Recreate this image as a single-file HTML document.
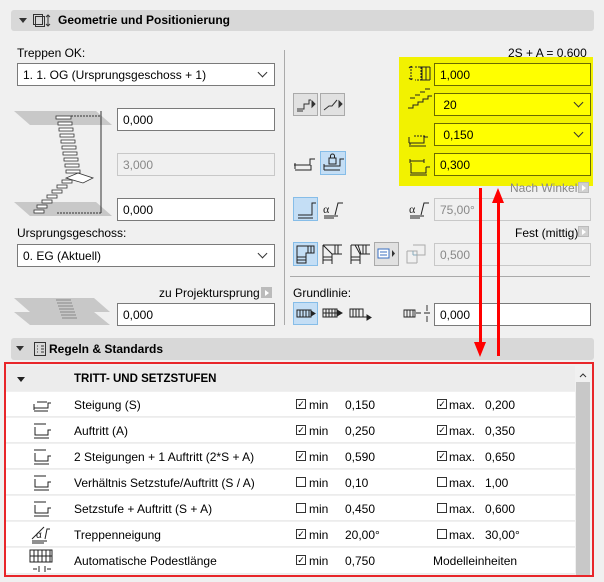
<!DOCTYPE html>
<html><head><meta charset="utf-8"><style>
*{margin:0;padding:0;box-sizing:border-box}
body{width:604px;height:582px;background:#f0f0f0;font-family:"Liberation Sans",sans-serif;font-size:12px;color:#000;position:relative;overflow:hidden}
.a{position:absolute}
.hdr{position:absolute;left:11px;width:583px;height:21px;background:#d8d8d8;border-radius:3px;font-weight:bold;font-size:12px}
.tri{position:absolute;width:0;height:0;border-left:4px solid transparent;border-right:4px solid transparent;border-top:5px solid #333}
.inp{position:absolute;height:23px;background:#fff;border:1px solid #7a7a7a;padding:4px 0 0 5px;font-size:12px}
.dis{background:#f0f0f0;border-color:#c8c8c8;color:#888}
.yel{background:#ffff00;border-color:#6a6a00}
.chev{position:absolute;right:8px;top:6px;width:7px;height:7px;border-right:1px solid #333;border-bottom:1px solid #333;transform:rotate(45deg)}
.btn{position:absolute;border:1px solid #aaa;background:#e1e1e1}
.sel{background:#c4def5;border:1px solid #86bde8}
.row{position:absolute;left:6px;width:569px;height:25px;background:#fff;border-bottom:1px solid #ececec}
.row span{position:absolute;top:6px}
.cb{position:absolute;top:7px;width:10px;height:10px;border:1px solid #333;background:#fff;font-size:9px;line-height:8px;text-align:center}
.sm{position:absolute;width:11px;height:11px;background:#d0d0d0;border:1px solid #bbb}
.sm:after{content:"";position:absolute;left:3px;top:2px;border-top:3px solid transparent;border-bottom:3px solid transparent;border-left:4px solid #fff}
</style></head><body>

<div class="hdr" style="top:10px"><div class="tri" style="left:8px;top:8px"></div>
<svg class="a" style="left:21px;top:3px" width="20" height="15"><rect x="1.5" y="1.5" width="9" height="10" fill="none" stroke="#333"/><rect x="3.5" y="3.5" width="9" height="10" fill="none" stroke="#333"/><path d="M16 2v11M14 4l2-2 2 2M14 11l2 2 2-2" stroke="#333" fill="none"/></svg>
<span class="a" style="left:47px;top:3px">Geometrie und Positionierung</span></div>

<span class="a" style="left:17px;top:46px">Treppen OK:</span>
<div class="inp" style="left:17px;top:63px;width:258px">1. 1. OG (Ursprungsgeschoss + 1)<div class="chev" style="top:5px"></div></div>

<svg class="a" style="left:14px;top:108px" width="100" height="112">
<polygon points="0,3 82,3 98,17 16,17" fill="#c8c8c8"/><polygon points="0,94 82,94 98,108 16,108" fill="#c8c8c8"/>
<path d="M57,8 L87,8 M87,3 V105 M43,105 L87,105" stroke="#333" stroke-dasharray="2,1" fill="none"/>
<path d="M87,3V105" stroke="#333"/>
<g fill="#fff" stroke="#333" stroke-width="0.8">
<rect x="42" y="8" width="15" height="3"/><rect x="44" y="14" width="14" height="3"/><rect x="45" y="20" width="14" height="3"/><rect x="46" y="26" width="14" height="3"/><rect x="47" y="32" width="14" height="3"/><rect x="48" y="38" width="14" height="3"/><rect x="49" y="44" width="14" height="3"/><rect x="50" y="50" width="14" height="3"/><rect x="51" y="56" width="14" height="3"/><rect x="52" y="62" width="14" height="3"/>
<polygon points="64,65 79,70 69,75 52,70"/>
<rect x="48" y="72" width="10" height="3"/><rect x="43" y="77" width="10" height="3"/><rect x="38" y="82" width="10" height="3"/><rect x="33" y="87" width="10" height="3"/><rect x="28" y="92" width="10" height="3"/><rect x="23" y="97" width="10" height="3"/><rect x="20" y="102" width="10" height="3"/></g></svg>

<div class="inp" style="left:117px;top:108px;width:158px">0,000</div>
<div class="inp dis" style="left:117px;top:153px;width:158px">3,000</div>
<div class="inp" style="left:117px;top:198px;width:158px">0,000</div>
<span class="a" style="left:17px;top:226px">Ursprungsgeschoss:</span>
<div class="inp" style="left:17px;top:244px;width:258px">0. EG (Aktuell)<div class="chev" style="top:5px"></div></div>
<span class="a" style="left:159px;top:286px">zu Projektursprung</span>
<div class="sm" style="left:261px;top:287px;background:#bbb"></div>
<svg class="a" style="left:14px;top:295px" width="100" height="32"><polygon points="0,3 80,3 96,17 16,17" fill="#c8c8c8"/><polygon points="0,17 80,17 96,30 16,30" fill="#c8c8c8"/><g stroke="#888"><path d="M42,5h15M43,8h15M44,11h15M45,14h15M46,17h15M47,20h15M48,23h15"/></g></svg>
<div class="inp" style="left:117px;top:303px;width:158px">0,000</div>

<div class="a" style="left:284px;top:50px;width:1px;height:235px;background:#aaa"></div>
<div class="a" style="left:284px;top:285px;width:1px;height:40px;background:#aaa"></div>

<span class="a" style="left:508px;top:46px">2S + A = 0,600</span>
<div class="a" style="left:399px;top:57px;width:194px;height:129px;background:#f2f200"></div>
<svg class="a" style="left:408px;top:64px" width="24" height="112" stroke="#222" fill="none">
<path d="M3,2v14M1,4l2-2 2,2M1,14l2,2 2-2M7,3h6v13h-6" stroke-dasharray="2,1"/><path d="M12,3h10M12,16h10M14,3v13M18,3v13M22,3v13"/>
<path d="M0,50h5v-3h5v-3h5v-3h5v-3h4" transform="translate(0,-6)"/><path d="M2,40h5M7,37h5M12,34h5M17,31h5" transform="translate(0,-6)"/>
<path d="M1,79h15v-6h4M2,79v2M1,73v6" /><path d="M6,72h12" stroke-dasharray="2,1"/><path d="M1,82h17"/>
<path d="M3,101v8h15v-6M18,103h4M2,97h14M2,95v4M16,95v4" /><path d="M3,101v-2" stroke-dasharray="2,1"/><path d="M2,111h17"/>
</svg>
<div class="inp yel" style="left:434px;top:63px;width:157px">1,000</div>
<div class="inp yel" style="left:434px;top:93px;width:157px">&nbsp;20<div class="chev" style="top:5px"></div></div>
<div class="inp yel" style="left:434px;top:123px;width:157px">&nbsp;0,150<div class="chev" style="top:5px"></div></div>
<div class="inp yel" style="left:434px;top:153px;width:157px">0,300</div>
<span class="a" style="left:510px;top:181px;color:#888">Nach Winkel</span>
<div class="sm" style="left:578px;top:182px"></div>

<div class="btn" style="left:293px;top:93px;width:25px;height:23px"><svg width="23" height="21" stroke="#333" fill="none"><path d="M3,15h7v-5h5v-4h2M3,17h6"/><path d="M18,7l3,3-3,3z" fill="#333"/></svg></div>
<div class="btn" style="left:320px;top:93px;width:25px;height:23px"><svg width="23" height="21" stroke="#333" fill="none"><path d="M3,16l5-4h3l5-6"/><path d="M18,7l3,3-3,3z" fill="#333"/></svg></div>

<svg class="a" style="left:293px;top:153px" width="25" height="20" stroke="#222" fill="none"><path d="M1,12h16v-6h5M17,6h0M2,17h16v-5M2,10v6"/><path d="M3,12h12" stroke-dasharray="2,1"/></svg>
<div class="btn sel" style="left:320px;top:151px;width:26px;height:24px"><svg width="24" height="22" stroke="#222" fill="none"><rect x="8" y="6" width="7" height="6"/><path d="M9.5,6v-2a2,2 0 0 1 4,0v2M3,14h16v-7h4M3,18h16M3,12v6"/></svg></div>

<div class="btn sel" style="left:293px;top:197px;width:25px;height:24px"><svg width="23" height="22" stroke="#222" fill="none"><path d="M4,17h14v-12h4M4,20h15"/></svg></div>
<svg class="a" style="left:322px;top:199px" width="22" height="20" stroke="#222" fill="none"><text x="1" y="14" font-size="12" fill="#222" stroke="none" font-family="Liberation Serif">α</text><path d="M13,16l3-12h5M2,17h14M2,19h10"/></svg>
<svg class="a" style="left:408px;top:199px" width="22" height="20" stroke="#222" fill="none"><text x="1" y="14" font-size="12" fill="#222" stroke="none" font-family="Liberation Serif">α</text><path d="M13,16l3-12h5M2,17h14M2,19h10"/></svg>
<div class="inp dis" style="left:434px;top:198px;width:157px">75,00°</div>
<span class="a" style="left:515px;top:226px">Fest (mittig)</span>
<div class="sm" style="left:578px;top:226px"></div>

<div class="btn sel" style="left:293px;top:242px;width:25px;height:24px"><svg width="23" height="22" stroke="#222" fill="none"><path d="M3,3h17v7h-8v10h-9zM14,3v7M17,3v7M3,14h9M3,17h9"/></svg></div>
<svg class="a" style="left:321px;top:243px" width="24" height="22" stroke="#222" fill="none"><path d="M2,2h19M2,2v19M2,2l9,9h10M14,2v9M17,2v9M2,14h9M2,17h9M11,11v10"/></svg>
<svg class="a" style="left:349px;top:243px" width="24" height="22" stroke="#222" fill="none"><path d="M2,2h19M2,2v19M11,11h10M14,2v9M17,2v9M2,14h9M2,17h9M11,11v10M6,2l5,9M9,2l3,9"/></svg>
<div class="btn" style="left:374px;top:242px;width:25px;height:24px"><svg width="23" height="22"><rect x="3" y="6" width="11" height="9" fill="#fff" stroke="#3a6fc0"/><path d="M5,9h7M5,12h7" stroke="#3a6fc0"/><path d="M17,7l3,3.5-3,3.5z" fill="#333"/></svg></div>
<svg class="a" style="left:405px;top:243px" width="22" height="22" stroke="#aaa" fill="none"><path d="M2,8h10v12M8,2h12v10h-8M2,8v12h10"/><path d="M8,12h4M8,8v4" stroke="#8ab"/></svg>
<div class="inp dis" style="left:434px;top:243px;width:157px">0,500</div>

<div class="a" style="left:290px;top:276px;width:300px;height:1px;background:#aaa"></div>
<span class="a" style="left:293px;top:286px">Grundlinie:</span>
<div class="btn sel" style="left:293px;top:302px;width:25px;height:23px"><svg width="23" height="21" stroke="#222" fill="none"><path d="M3,7h14v7h-14zM6,7v7M9,7v7M12,7v7M15,7v7"/><path d="M17,8l4,2.5-4,2.5z" fill="#222"/></svg></div>
<svg class="a" style="left:322px;top:304px" width="24" height="20" stroke="#222" fill="none"><path d="M1,5h14v8h-14zM1,9h14M4,5v8M7,5v8M10,5v8M13,5v8"/><path d="M15,6l5,3-5,3z" fill="#222"/></svg>
<svg class="a" style="left:349px;top:304px" width="24" height="22" stroke="#222" fill="none"><path d="M1,5h13v8h-13zM4,5v8M7,5v8M10,5v8M14,13h4"/><path d="M18,11l4,2.5-4,2.5z" fill="#222"/></svg>
<svg class="a" style="left:403px;top:304px" width="28" height="20" stroke="#222" fill="none"><path d="M1,6h11v7h-11zM4,6v7M7,6v7M10,6v7M13,9h5M24,1v6M24,12v6M21,9h6" stroke-width="0.9"/></svg>
<div class="inp" style="left:434px;top:303px;width:157px">0,000</div>

<div class="hdr" style="top:338px;height:22px"><div class="tri" style="left:5px;top:8px"></div>
<svg class="a" style="left:22px;top:3px" width="14" height="16" stroke="#333" fill="none"><rect x="1.5" y="1.5" width="11" height="13"/><path d="M4,5h1M8,5h3M4,8h1M8,8h3M4,11h1M8,11h3"/></svg>
<span class="a" style="left:38px;top:4px">Regeln &amp; Standards</span></div>

<div class="a" style="left:6px;top:366px;width:569px;height:25px;background:#ececec"></div>
<div class="tri" style="left:17px;top:377px;border-top-color:#222"></div>
<span class="a" style="left:74px;top:373px;font-weight:bold;font-size:11.5px">TRITT- UND SETZSTUFEN</span>
<div class="a" style="left:576px;top:366px;width:14px;height:208px;background:#f0f0f0"></div>
<div class="a" style="left:576px;top:382px;width:14px;height:194px;background:#c8c8c8"></div>
<svg class="a" style="left:578px;top:371px" width="10" height="8"><path d="M2,6l3-3 3,3" stroke="#333" fill="none"/></svg>

<div class="row" style="top:392px"><svg class="a" style="left:26px;top:4px" width="20" height="18" stroke="#222" fill="none"><path d="M2,12h14v-5h3M2,15h14M2,8v6M5,6h10" /></svg><span style="left:68px">Steigung (S)</span><div class="cb" style="left:290px">✓</div><span style="left:303px">min</span><span style="left:339px">0,150</span><div class="cb" style="left:431px">✓</div><span style="left:443px">max.</span><span style="left:479px">0,200</span></div>
<div class="row" style="top:418px"><svg class="a" style="left:26px;top:3px" width="20" height="20" stroke="#222" fill="none"><path d="M2,3h12M3,6v8h13v-5h3M2,17h15"/></svg><span style="left:68px">Auftritt (A)</span><div class="cb" style="left:290px">✓</div><span style="left:303px">min</span><span style="left:339px">0,250</span><div class="cb" style="left:431px">✓</div><span style="left:443px">max.</span><span style="left:479px">0,350</span></div>
<div class="row" style="top:444px"><svg class="a" style="left:26px;top:3px" width="20" height="20" stroke="#222" fill="none"><path d="M2,3h12M3,6v8h13v-5h3M2,17h15M3,8v6"/></svg><span style="left:68px">2 Steigungen + 1 Auftritt (2*S + A)</span><div class="cb" style="left:290px">✓</div><span style="left:303px">min</span><span style="left:339px">0,590</span><div class="cb" style="left:431px">✓</div><span style="left:443px">max.</span><span style="left:479px">0,650</span></div>
<div class="row" style="top:470px"><svg class="a" style="left:26px;top:3px" width="20" height="20" stroke="#222" fill="none"><path d="M2,3h12M3,6v8h13v-5h3M2,17h15M3,8v6"/></svg><span style="left:68px">Verhältnis Setzstufe/Auftritt (S / A)</span><div class="cb" style="left:290px"></div><span style="left:303px">min</span><span style="left:339px">0,10</span><div class="cb" style="left:431px"></div><span style="left:443px">max.</span><span style="left:479px">1,00</span></div>
<div class="row" style="top:496px"><svg class="a" style="left:26px;top:3px" width="20" height="20" stroke="#222" fill="none"><path d="M2,3h12M3,6v8h13v-5h3M2,17h15M3,8v6"/></svg><span style="left:68px">Setzstufe + Auftritt (S + A)</span><div class="cb" style="left:290px"></div><span style="left:303px">min</span><span style="left:339px">0,450</span><div class="cb" style="left:431px"></div><span style="left:443px">max.</span><span style="left:479px">0,600</span></div>
<div class="row" style="top:522px"><svg class="a" style="left:24px;top:3px" width="22" height="20" stroke="#222" fill="none"><text x="6" y="13" font-size="10" fill="#222" stroke="none">α</text><path d="M2,14l12-12M15,14l2-10h3M2,16h15M2,18h12"/></svg><span style="left:68px">Treppenneigung</span><div class="cb" style="left:290px">✓</div><span style="left:303px">min</span><span style="left:339px">20,00°</span><div class="cb" style="left:431px"></div><span style="left:443px">max.</span><span style="left:479px">30,00°</span></div>
<div class="row" style="top:548px;height:26px"><svg class="a" style="left:22px;top:0" width="28" height="26" stroke="#222" fill="none"><path d="M2,2h22v12h-22zM2,8h22M6,2v12M10,2v12M14,2v12M18,2v12M22,2v12M5,21h4M19,21h4M11,18v6M17,18v6"/></svg><span style="left:68px">Automatische Podestlänge</span><div class="cb" style="left:290px">✓</div><span style="left:303px">min</span><span style="left:339px">0,750</span><span style="left:427px">Modelleinheiten</span></div>

<div class="a" style="left:4px;top:362px;width:590px;height:215px;border:2px solid #e8262a"></div>

<div class="a" style="left:479px;top:188px;width:3px;height:158px;background:#f00"></div>
<div class="a" style="left:474px;top:342px;border-left:6.5px solid transparent;border-right:6.5px solid transparent;border-top:15px solid #f00"></div>
<div class="a" style="left:497px;top:200px;width:3px;height:156px;background:#f00"></div>
<div class="a" style="left:492px;top:188px;border-left:6.5px solid transparent;border-right:6.5px solid transparent;border-bottom:15px solid #f00"></div>
</body></html>
